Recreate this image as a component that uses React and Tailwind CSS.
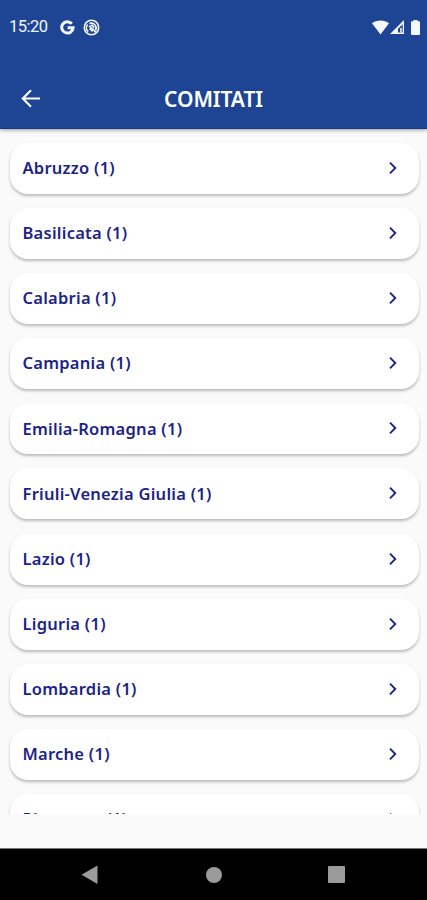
import React from "react";

const comitati = [
  { name: "Abruzzo", count: 1 },
  { name: "Basilicata", count: 1 },
  { name: "Calabria", count: 1 },
  { name: "Campania", count: 1 },
  { name: "Emilia-Romagna", count: 1 },
  { name: "Friuli-Venezia Giulia", count: 1 },
  { name: "Lazio", count: 1 },
  { name: "Liguria", count: 1 },
  { name: "Lombardia", count: 1 },
  { name: "Marche", count: 1 },
  { name: "Piemonte", count: 1 },
];

function StatusBar() {
  return (
    <div className="flex h-[54px] items-center pl-[9px] pr-[7px] text-[#f4f7ff]">
      <span className="w-[51px] pt-px font-['Roboto',sans-serif] text-[16.5px] tracking-[-0.5px]">15:20</span>
      <svg className="h-[15px] w-[15px]" viewBox="0 0 15 15" fill="none" stroke="currentColor" strokeWidth="3">
        <path d="M11.800 3.700A5.700 5.700 0 1 0 13.100 7.800H7.600" />
      </svg>
      <svg className="ml-2 h-[17px] w-[17px]" viewBox="0 0 17 17" fill="none" stroke="currentColor" strokeWidth="1.600">
        <circle cx="8.500" cy="8.500" r="7.200" />
        <path d="M5.200 12.600A5 5 0 0 1 4.600 5.600M6.400 4.600a4.800 4.800 0 0 1 6.200 6.600M6.200 6.800L13.400 13.600M6.600 9.400l3 3" />
        <path d="M7.600 6.600a2 2 0 0 1 2.800 2.600" />
      </svg>
      <div className="ml-auto flex items-center">
        <svg className="h-[15px] w-[17px]" viewBox="0 0 17 15" fill="currentColor">
          <path d="M0 3.300C4.800-.5 12.200-.5 17 3.300L8.500 14.500z" />
        </svg>
        <svg className="ml-px h-[14px] w-[14px]" viewBox="0 0 14 14">
          <path fill="currentColor" fillRule="evenodd" d="M14 0v14H0zM12.700 4.200L8 8.800v3.800h4.700z" />
          <path fill="currentColor" d="M10.200 8h1.500v4.600h-1.500z" />
        </svg>
        <svg className="ml-[7px] h-[15px] w-[9px]" viewBox="0 0 9 15" fill="currentColor">
          <path d="M2.500 0h4v1.300H8q1 0 1 1V14q0 1-1 1H1q-1 0-1-1V2.300q0-1 1-1h1.500z" />
        </svg>
      </div>
    </div>
  );
}

function Header() {
  return (
    <header className="relative z-10 h-[129px] shrink-0 border-b border-[#123a94] bg-[#1e4594] shadow-[0_1px_4px_rgba(0,0,0,0.4)]">
      <StatusBar />
      <div className="grid h-[90px] grid-cols-[62px_1fr_62px] items-center text-white">
        <button className="pl-[21px]" aria-label="Indietro">
          <svg className="h-[20px] w-[20px]" viewBox="0 0 20 20" fill="none" stroke="currentColor" strokeWidth="2.100">
            <path d="M19 9.500H2.500M10 1.300L1.800 9.500l8.200 8.200" />
          </svg>
        </button>
        <h1 className="text-center text-[21px] font-semibold leading-none tracking-[-0.1px]">COMITATI</h1>
      </div>
    </header>
  );
}

function ComitatoCard({ name, count }) {
  return (
    <div className="flex h-[51px] shrink-0 items-center justify-between rounded-[18px] bg-white pl-[13px] pr-[22px] text-[#1c2487] shadow-[0_2px_3px_rgba(0,0,0,0.26)]">
      <span className="text-[16.500px] font-semibold tracking-[0.25px]">
        {name} ({count})
      </span>
      <svg className="mb-px h-[14px] w-[9px]" viewBox="0 0 9 14" fill="none" stroke="currentColor" strokeWidth="1.900">
        <path d="M2 1.700L7.300 7L2 12.300" />
      </svg>
    </div>
  );
}

function NavBar() {
  return (
    <nav className="grid h-[52px] shrink-0 grid-cols-[152px_123px_1fr] items-center border-t border-[#777] bg-black text-[#9b9b9b]">
      <svg className="ml-[81px] h-[20px] w-[17px]" viewBox="0 0 17 20" fill="currentColor">
        <path d="M16.500 .5v18.500L.5 9.700z" />
      </svg>
      <div className="ml-[54px] h-[16px] w-[16px] rounded-full bg-[#9b9b9b]"></div>
      <div className="ml-[53px] h-[17px] w-[17px] rounded-[1px] bg-[#9b9b9b]"></div>
    </nav>
  );
}

function App() {
  return (
    <div className="flex h-[900px] w-[427px] flex-col overflow-hidden bg-[#fafafa] font-['Noto_Sans',sans-serif]">
      <Header />
      <main className="flex h-[685px] shrink-0 flex-col gap-[14.1px] overflow-hidden pl-[9.500px] pr-[8px] pt-[14px]">
        {comitati.map((c) => (
          <ComitatoCard key={c.name} name={c.name} count={c.count} />
        ))}
      </main>
      <div className="grow"></div>
      <NavBar />
    </div>
  );
}

export default App;
